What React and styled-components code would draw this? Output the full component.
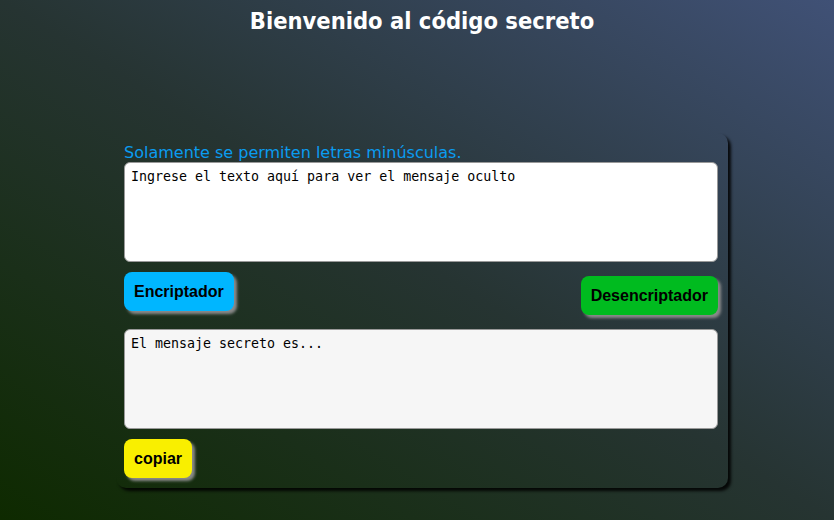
import styled, { createGlobalStyle } from "styled-components"

const GlobalStyle = createGlobalStyle`
  html, body {
    margin: 0;
    padding: 0;
  }
  body {
    width: 834px;
    height: 520px;
    overflow: hidden;
    background: linear-gradient(to top right, #0e2a00 0%, #263432 50%, #405176 100%);
  }
`

const Page = styled.main`
  display: flex;
  flex-direction: column;
  align-items: center;
  height: 520px;
  padding-left: 10px;
  box-sizing: border-box;
`

const Title = styled.h1`
  margin: 6px 0 0 0;
  font-family: "DejaVu Sans Condensed", "DejaVu Sans", sans-serif;
  font-weight: bold;
  font-size: 23.5px;
  color: #fff;
  line-height: 30px;
`

const Card = styled.section`
  margin-top: 97px;
  width: 612px;
  box-sizing: border-box;
  padding: 10px 10px 10px 8px;
  border-radius: 10px;
  box-shadow: 3px 3px 3px rgba(0, 0, 0, 0.85);
  display: flex;
  flex-direction: column;
`

const Hint = styled.p`
  margin: 0;
  font-family: "DejaVu Sans", sans-serif;
  font-size: 16px;
  line-height: 19px;
  color: #0a9cf0;
`

const TextBox = styled.textarea`
  box-sizing: border-box;
  width: 594px;
  height: 100px;
  resize: none;
  margin: 0;
  padding: 6px;
  border: 1px solid #999;
  border-radius: 6px;
  background: ${p => p.$muted ? "#f6f6f6" : "#fff"};
  font-family: "DejaVu Sans Mono", monospace;
  font-size: 13.3px;
  line-height: 16px;
  color: #000;
  outline: none;
`

const Actions = styled.div`
  display: flex;
  justify-content: space-between;
  align-items: flex-start;
  width: 594px;
  margin: 10px 0 ${p => p.$last ? 0 : 14}px 0;
`

const Button = styled.button`
  height: 39px;
  padding: 0 10px;
  margin-top: ${p => p.$drop || 0}px;
  border: none;
  border-radius: 8px;
  background: ${p => p.$color};
  box-shadow: 3px 3px 3px #8a8a8a;
  font-family: "Liberation Sans", Arial, sans-serif;
  font-weight: bold;
  font-size: 16px;
  color: #000;
  cursor: pointer;
`

const App = () => {
  return <>
    <GlobalStyle />
    <Page>
      <Title>Bienvenido al código secreto</Title>

      <Card>
        <Hint>Solamente se permiten letras minúsculas.</Hint>
        <TextBox defaultValue="Ingrese el texto aquí para ver el mensaje oculto" />

        <Actions>
          <Button $color="#00b6ff">Encriptador</Button>
          <Button $color="#00bb1f" $drop={4}>Desencriptador</Button>
        </Actions>

        <TextBox $muted readOnly defaultValue="El mensaje secreto es..." />

        <Actions $last>
          <Button $color="#f9ef00">copiar</Button>
        </Actions>
      </Card>
    </Page>
  </>
}

export default App
